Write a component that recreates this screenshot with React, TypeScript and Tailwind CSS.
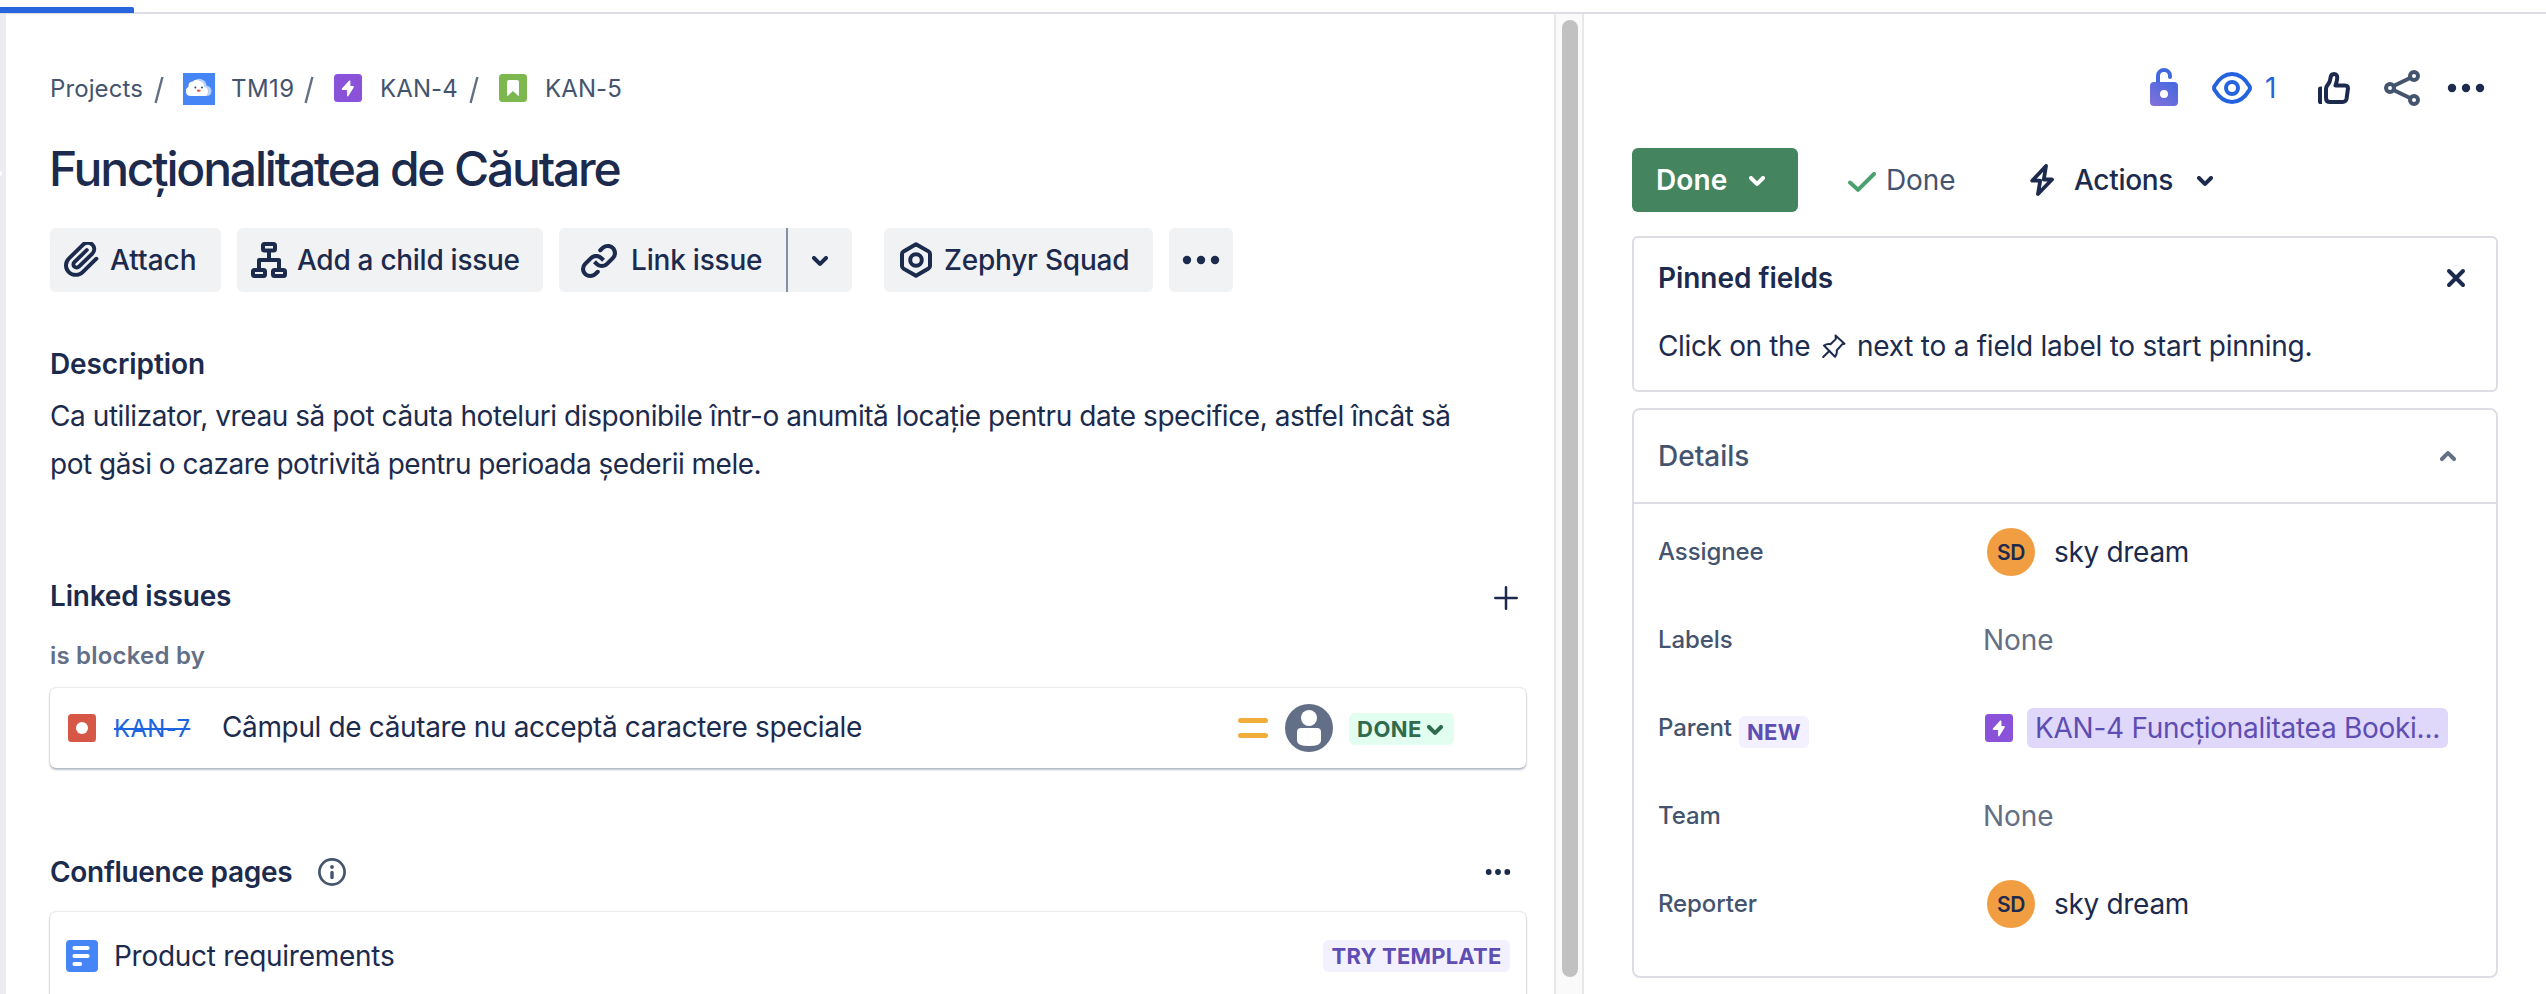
import React from "react";

type IconProps = { className?: string };

function ChevronDown({ className = "" }: IconProps) {
  return (
    <svg viewBox="8 10 8 5" className={"h-[10px] w-4 shrink-0 " + className} fill="currentColor">
      <path d="M8.292 10.293a1.009 1.009 0 000 1.419l2.939 2.965c.218.215.5.322.779.322s.556-.107.769-.322l2.93-2.955a1.01 1.01 0 000-1.419.987.987 0 00-1.406 0l-2.298 2.317-2.307-2.327a.99.99 0 00-1.406 0z" />
    </svg>
  );
}

function Dots({ r, gap, className = "" }: IconProps & { r: number; gap: number }) {
  return (
    <svg viewBox="-20 -6 40 12" width={40} height={12} className={"shrink-0 " + className} fill="currentColor">
      <circle cx={-gap} r={r} />
      <circle r={r} />
      <circle cx={gap} r={r} />
    </svg>
  );
}

function AttachIcon() {
  return (
    <svg viewBox="3 3 18 18" className="h-9 w-9 shrink-0" fill="currentColor">
      <path d="M11.643 17.965c-1.53 1.495-4.016 1.496-5.542.004a3.773 3.773 0 01.002-5.412l7.147-6.985a2.316 2.316 0 013.233-.003c.893.873.895 2.282.004 3.153l-6.703 6.55a.653.653 0 01-.914-.008.62.62 0 010-.902l6.229-6.087a.941.941 0 000-1.353.995.995 0 00-1.384 0l-6.23 6.087a2.502 2.502 0 000 3.607 2.643 2.643 0 003.683.009l6.703-6.55a4.074 4.074 0 00-.003-5.859 4.306 4.306 0 00-6.002.003l-7.148 6.985a5.655 5.655 0 00-.001 8.118c2.29 2.239 6.015 2.238 8.308-.004l6.862-6.705a.941.941 0 000-1.353.995.995 0 00-1.384 0l-6.86 6.705z" transform="translate(0 -0.6)" />
    </svg>
  );
}

function ChildIssuesIcon() {
  return (
    <svg viewBox="0 0 36 36" className="h-9 w-9 shrink-0" fill="none" stroke="currentColor" strokeWidth="4">
      <rect x="12" y="2" width="12" height="6.4" rx="1.5" />
      <rect x="2" y="28" width="12" height="6" rx="1.5" />
      <rect x="22" y="28" width="12" height="6" rx="1.5" />
      <path d="M18 9v10M8 27v-9h20v9" strokeLinejoin="round" />
    </svg>
  );
}

function LinkIcon() {
  return (
    <svg viewBox="3 3 18 18" className="h-9 w-9 shrink-0" fill="currentColor">
      <path d="M12.856 5.457l-.937.92a1.002 1.002 0 000 1.437 1.047 1.047 0 001.463 0l.984-.966c.967-.95 2.542-1.135 3.602-.288a2.54 2.54 0 01.203 3.81l-2.903 2.852a2.646 2.646 0 01-3.696 0l-1.11-1.09L9 13.57l1.108 1.089c1.822 1.788 4.802 1.788 6.622 0l2.905-2.852a4.558 4.558 0 00-.357-6.82c-1.893-1.517-4.695-1.226-6.422.47" />
      <path d="M11.144 19.543l.937-.92a1.002 1.002 0 000-1.437 1.047 1.047 0 00-1.462 0l-.985.966c-.967.95-2.542 1.135-3.602.288a2.54 2.54 0 01-.203-3.81l2.903-2.852a2.646 2.646 0 013.696 0l1.11 1.09L15 11.43l-1.108-1.089c-1.822-1.788-4.802-1.788-6.622 0l-2.905 2.852a4.558 4.558 0 00.357 6.82c1.893 1.517 4.695 1.226 6.422-.47" />
    </svg>
  );
}

function ZephyrIcon() {
  return (
    <svg viewBox="0 0 32 36" className="h-9 w-8 shrink-0" fill="none" stroke="currentColor" strokeWidth="4" strokeLinejoin="round">
      <path d="M16 2.200L3.500 9.400Q2 10.300 2 12v12q0 1.700 1.500 2.600L16 33.800l12.500-7.200Q30 25.700 30 24V12q0-1.700-1.500-2.600z" />
      <circle cx="16" cy="18" r="5.800" />
    </svg>
  );
}

function EpicIcon() {
  return (
    <svg viewBox="0 0 28 28" className="h-7 w-7 shrink-0">
      <rect width="28" height="28" rx="3.500" fill="#8A52D9" />
      <path d="M15.200 6.600q1.200-.6 1.200.8V12h2.600q1.500.1.700 1.500l-5.300 8.600q-1.300 1.200-1.300-.6V16H8.700q-1.600-.1-.8-1.400z" fill="#fff" />
    </svg>
  );
}

function StoryIcon() {
  return (
    <svg viewBox="0 0 28 28" className="h-7 w-7 shrink-0">
      <rect width="28" height="28" rx="3.500" fill="#7CB74F" />
      <path d="M8 8q0-2 2-2h8q2 0 2 2v13q0 1.600-1.200.6L14 17l-4.800 4.600Q8 22.600 8 21z" fill="#fff" />
    </svg>
  );
}

function CloudAvatar() {
  return (
    <svg viewBox="0 0 32 32" className="mt-[2px] h-8 w-8 shrink-0">
      <rect width="32" height="32" fill="#4585F6" />
      <path d="M13 7q3-2 6-.5 4 1 4.500 6 5 1 5 5.500 0 5-5 5H12z" fill="#B7D1FB" />
      <path d="M8 23q-5 0-5-4.500Q3 15 5.500 13.500 5 9 9.500 8.500 13 5.500 16.500 8q4.500.5 4.500 5.500 4 1.200 4 5 0 4.500-4.500 4.500z" fill="#fff" />
      <circle cx="12.400" cy="14.500" r="1" fill="#344563" />
      <circle cx="19" cy="14.500" r="1" fill="#344563" />
      <path d="M13.500 17q2.200-.8 4.400 0-.5 2-2.200 2t-2.200-2z" fill="#F15B50" />
    </svg>
  );
}

function Slash() {
  return (
    <svg viewBox="0 0 10 28" className="mt-[3px] h-7 w-[10px] shrink-0" stroke="#626F86" strokeWidth="2.400">
      <path d="M8.400 1L1.600 27" />
    </svg>
  );
}

function LockIcon() {
  return (
    <svg viewBox="0 0 28 38" className="h-[38px] w-7 shrink-0">
      <defs>
        <linearGradient id="lock" gradientUnits="userSpaceOnUse" x1="2" y1="38" x2="22" y2="12">
          <stop offset="0" stopColor="#8270DB" />
          <stop offset="1" stopColor="#4569DE" />
        </linearGradient>
      </defs>
      <path d="M8 15V8a6 6 0 0112 0v1" fill="none" stroke="#4268DE" strokeWidth="4" strokeLinecap="round" />
      <path fillRule="evenodd" d="M4 14h20a4 4 0 014 4v16a4 4 0 01-4 4H4a4 4 0 01-4-4V18a4 4 0 014-4zm10 8a4 4 0 100 8 4 4 0 000-8z" fill="url(#lock)" />
    </svg>
  );
}

function EyeIcon() {
  return (
    <svg viewBox="0 0 40 32" className="h-8 w-10 shrink-0" fill="none" stroke="#2563DE" strokeWidth="4">
      <path d="M2.500 14.200C7 6.500 12.800 2 20 2s13 4.500 17.500 12.200q1 1.800 0 3.600C33 25.500 27.200 30 20 30S7 25.500 2.500 17.800q-1-1.800 0-3.600z" />
      <circle cx="20" cy="16" r="6" />
    </svg>
  );
}

function ThumbIcon() {
  return (
    <svg viewBox="0 0 32 32" className="h-8 w-8 shrink-0 text-[#1C2B4D]">
      <path d="M0 17q0-2.600 2.600-2.600H4V32H2.600Q0 32 0 29.400z" fill="currentColor" />
      <path d="M8 17q0-2.400 1.600-4Q12 10.500 12.400 6.500 12.800 2 16 2q3.400 0 3.200 4-.2 3.500-1.700 7.500H27q3.400 0 2.900 3.500l-1.300 9.500Q28 30 24.500 30H12q-4 0-4-4z" fill="none" stroke="currentColor" strokeWidth="4" strokeLinejoin="round" />
    </svg>
  );
}

function ShareIcon() {
  return (
    <svg viewBox="0 0 36 36" className="h-9 w-9 shrink-0" fill="none" stroke="#44546F" strokeWidth="4">
      <circle cx="6" cy="18" r="4" />
      <circle cx="30" cy="6" r="4" />
      <circle cx="30" cy="30" r="4" />
      <path d="M9.500 16l17-8.200M9.500 20l17 8.200" />
    </svg>
  );
}

function BoltIcon() {
  return (
    <svg viewBox="0 0 24 32" className="h-8 w-6 shrink-0" fill="none" stroke="currentColor" strokeWidth="3.800" strokeLinejoin="round">
      <path d="M16 2L2.200 16.700h8L8 30l14-14.500h-8.200z" />
    </svg>
  );
}

function PinIcon() {
  return (
    <svg viewBox="0 0 24 24" className="h-6 w-6 shrink-0" fill="none" stroke="currentColor" strokeWidth="2" strokeLinejoin="round" strokeLinecap="round">
      <path d="M13.500 1.500l9 8.200-2.400.6-5.400 6.200q.6 3.500-1.700 6.300L2 11.500q3.200-2 6.500-1.200l5.400-5.400z" />
      <path d="M7.300 17L1.200 23" />
    </svg>
  );
}

const buttonBox = "flex h-16 items-center rounded-[6px] bg-[#F1F2F4]";

function Avatar() {
  return (
    <span className="ml-[3px] flex h-12 w-12 shrink-0 items-center justify-center rounded-full bg-[#F19D41] text-[21px] font-semibold tracking-[-0.3px] text-[#1C2B4D]">
      SD
    </span>
  );
}

function Person() {
  return (
    <>
      <Avatar />
      <span className="ml-[19px] tracking-[-0.31px]">sky dream</span>
    </>
  );
}

function Field({ label, badge, children }: { label: string; badge?: string; children: React.ReactNode }) {
  return (
    <div className="flex h-[88px] items-center">
      <div className="flex w-[350px] shrink-0 items-center pl-6">
        <span className="text-[24px] font-medium tracking-[-0.1px] text-[#44546F]">{label}</span>
        {badge && (
          <span className="mt-2 ml-[7px] flex h-8 w-[70px] items-center justify-center rounded-[6px] bg-[#F3F0FF] text-[22px] font-bold tracking-[0.3px] text-[#5E4DB2]">
            {badge}
          </span>
        )}
      </div>
      <div className="flex items-center">{children}</div>
    </div>
  );
}

function IssuePanel() {
  return (
    <main className="w-[1548px] shrink-0 pt-[58px] pl-11">
      <nav className="flex h-8 items-center text-[24px] text-[#44546F]">
        <span className="mt-[2px] w-[104px] tracking-[0.1px]">Projects</span>
        <Slash />
        <span className="ml-[19px] flex">
          <CloudAvatar />
        </span>
        <span className="mt-[2px] ml-4 w-[73px] tracking-[0.4px]">TM19</span>
        <Slash />
        <span className="ml-5 flex">
          <EpicIcon />
        </span>
        <span className="mt-[2px] ml-[18px] w-[89px] tracking-[0.1px]">KAN-4</span>
        <Slash />
        <span className="ml-[20px] flex">
          <StoryIcon />
        </span>
        <span className="mt-[2px] ml-[18px] tracking-[0.1px]">KAN-5</span>
      </nav>

      <h1 className="mt-[37px] -ml-px flex h-14 items-center text-[48px] font-medium tracking-[-2.2px] whitespace-nowrap">
        Funcționalitatea de Căutare
      </h1>

      <div className="mt-[31px] flex font-medium">
        <button className={buttonBox + " w-[171px] pl-[14px]"}>
          <AttachIcon />
          <span className="ml-[10px]">Attach</span>
        </button>
        <button className={buttonBox + " ml-4 w-[306px] pl-[14px]"}>
          <ChildIssuesIcon />
          <span className="ml-[10px] tracking-[-0.28px] whitespace-nowrap">Add a child issue</span>
        </button>
        <button className={buttonBox + " ml-4 w-[227px] rounded-r-none pl-[22px]"}>
          <LinkIcon />
          <span className="ml-[14px] tracking-[-0.2px] whitespace-nowrap">Link issue</span>
        </button>
        <div className="h-16 w-[2px] bg-[#8590A2]" />
        <button className={buttonBox + " w-16 justify-center rounded-l-none pt-[2px]"}>
          <ChevronDown />
        </button>
        <button className={buttonBox + " ml-8 w-[269px] pl-4"}>
          <ZephyrIcon />
          <span className="ml-3 tracking-[-0.22px] whitespace-nowrap">Zephyr Squad</span>
        </button>
        <button className={buttonBox + " ml-4 w-16 justify-center"}>
          <Dots r={4.2} gap={14} />
        </button>
      </div>

      <h2 className="mt-[52px] flex h-10 items-center font-semibold tracking-[-0.1px]">Description</h2>
      <p className="mt-2 h-24 leading-[48px] whitespace-nowrap">
        <span className="block tracking-[-0.43px]">
          Ca utilizator, vreau să pot căuta hoteluri disponibile într-o anumită locație pentru date specifice, astfel încât să
        </span>
        <span className="block tracking-[-0.5px]">pot găsi o cazare potrivită pentru perioada șederii mele.</span>
      </p>

      <div className="mt-[88px] flex h-10 w-[1476px] items-center justify-between pr-2">
        <h2 className="font-semibold tracking-[-0.2px]">Linked issues</h2>
        <svg viewBox="0 0 24 24" className="mt-1 h-6 w-6" stroke="currentColor" strokeWidth="2.500" strokeLinecap="round">
          <path d="M12 1.300v21.400M1.300 12h21.400" />
        </svg>
      </div>
      <h3 className="mt-6 flex h-8 items-center text-[24px] font-semibold tracking-[0.2px] text-[#626F86]">is blocked by</h3>

      <div className="mt-4 flex h-20 w-[1476px] items-center rounded-[6px] bg-white pl-[18px] shadow-[0_2px_2px_rgba(9,30,66,0.25),0_0_2px_rgba(9,30,66,0.31)]">
        <svg viewBox="0 0 28 28" className="h-7 w-7 shrink-0">
          <rect width="28" height="28" rx="3.500" fill="#D65745" />
          <circle cx="14" cy="14" r="6" fill="#fff" />
        </svg>
        <span className="ml-[18px] w-[108px] text-[24px] tracking-[0.3px] text-[#1D64E0]">
          <span className="mt-[2px] block line-through decoration-2">KAN-7</span>
        </span>
        <span className="-mt-[2px] w-[1016px] tracking-[-0.36px]">Câmpul de căutare nu acceptă caractere speciale</span>
        <svg viewBox="0 0 30 20" className="h-5 w-[30px] shrink-0 text-[#F2AE3D]" fill="currentColor">
          <rect width="30" height="5" rx="2.500" />
          <rect y="15" width="30" height="5" rx="2.500" />
        </svg>
        <svg viewBox="0 0 48 48" className="ml-[17px] h-12 w-12 shrink-0">
          <circle cx="24" cy="24" r="24" fill="#626F86" />
          <circle cx="24" cy="14" r="8" fill="#fff" />
          <path d="M12 28q0-4 4-4h16q4 0 4 4v8.500q0 5.500-12 5.500T12 36.500z" fill="#fff" />
        </svg>
        <span className="mt-[2px] ml-4 flex h-8 w-[105px] items-center rounded-[6px] bg-[#E1FEF1] pl-2 text-[22px] font-bold tracking-[0.5px] text-[#2F6B4C]">
          DONE
          <ChevronDown className="mt-[2px] ml-[5px]" />
        </span>
      </div>

      <div className="mt-[84px] flex h-10 w-[1476px] items-center pr-2">
        <h2 className="w-[268px] font-semibold tracking-[-0.3px]">Confluence pages</h2>
        <svg viewBox="0 0 28 28" className="h-7 w-7" fill="none" stroke="#44546F">
          <circle cx="14" cy="14" r="12.600" strokeWidth="2.700" />
          <circle cx="14" cy="9" r="1.900" fill="#44546F" stroke="none" />
          <path d="M14 14.500v5" strokeWidth="3.400" strokeLinecap="round" />
        </svg>
        <Dots r={2.9} gap={9.3} className="ml-auto" />
      </div>

      <div className="mt-5 flex h-[120px] w-[1476px] items-center rounded-[6px] bg-white pb-8 pl-4 shadow-[0_2px_2px_rgba(9,30,66,0.25),0_0_2px_rgba(9,30,66,0.31)]">
        <svg viewBox="0 0 32 32" className="h-8 w-8 shrink-0">
          <rect width="32" height="32" rx="4" fill="#4585F6" />
          <path d="M7 8h12M7 16h12M7 24h5" stroke="#fff" strokeWidth="4" strokeLinecap="round" transform="translate(1 0) scale(1.080 1)" />
        </svg>
        <span className="ml-4 tracking-[-0.27px]">Product requirements</span>
        <span className="mr-4 ml-auto flex h-8 w-[187px] items-center justify-center rounded-[6px] bg-[#F3F0FF] text-[22px] font-bold tracking-[0.2px] whitespace-nowrap text-[#5E4DB2]">
          TRY TEMPLATE
        </span>
      </div>
    </main>
  );
}

function DetailsPanel() {
  return (
    <aside className="w-[914px] pt-[54px] pl-12">
      <div className="flex h-10 items-center pl-[518px]">
        <span className="-mt-[2px] flex">
          <LockIcon />
        </span>
        <span className="ml-[34px] flex">
          <EyeIcon />
        </span>
        <span className="ml-[13px] w-[53px] text-[#2563DE]">1</span>
        <ThumbIcon />
        <span className="ml-[34px] flex">
          <ShareIcon />
        </span>
        <Dots r={4.2} gap={14} className="ml-[26px]" />
      </div>

      <div className="mt-10 flex h-16 items-center">
        <button className="flex h-16 w-[166px] items-center rounded-[6px] bg-[#44845E] pl-6 font-semibold tracking-[0.1px] text-white">
          Done
          <ChevronDown className="mt-[2px] ml-[22px]" />
        </button>
        <svg viewBox="0 0 28 20" className="mt-[3px] ml-[50px] h-5 w-7" fill="none" stroke="#4BA06E" strokeWidth="4" strokeLinecap="round" strokeLinejoin="round">
          <path d="M2 10.500l8 7.300L26 2" />
        </svg>
        <span className="ml-[10px] w-[144px] tracking-[-0.1px] text-[#44546F]">Done</span>
        <BoltIcon />
        <span className="ml-5 w-[123px] font-medium tracking-[-0.3px]">Actions</span>
        <ChevronDown className="mt-[2px]" />
      </div>

      <section className="mt-6 h-[156px] w-[866px] rounded-[6px] border-2 border-[#DDDEE5] pt-5 pl-6">
        <div className="flex h-10 items-center justify-between pr-[30px]">
          <h2 className="font-semibold tracking-[-0.05px]">Pinned fields</h2>
          <svg viewBox="0 0 20 20" className="h-5 w-5" stroke="currentColor" strokeWidth="4" strokeLinecap="round">
            <path d="M3 3l14 14M17 3L3 17" />
          </svg>
        </div>
        <div className="mt-7 flex h-10 items-center">
          <span className="w-[164px] tracking-[-0.35px]">Click on the</span>
          <PinIcon />
          <span className="ml-[11px] tracking-[-0.25px]">next to a field label to start pinning.</span>
        </div>
      </section>

      <section className="mt-4 h-[570px] w-[866px] rounded-[8px] border-2 border-[#DDDEE5]">
        <div className="flex h-[94px] items-center justify-between border-b-2 border-[#DDDEE5] pr-10 pl-6">
          <h2 className="font-medium text-[#44546F]">Details</h2>
          <ChevronDown className="rotate-180 text-[#626F86]" />
        </div>
        <div className="pt-1">
          <Field label="Assignee">
            <Person />
          </Field>
          <Field label="Labels">
            <span className="-ml-px tracking-[-0.1px] text-[#626F86]">None</span>
          </Field>
          <Field label="Parent" badge="NEW">
            <span className="ml-px flex">
              <EpicIcon />
            </span>
            <span className="ml-[14px] flex h-10 w-[421px] items-center justify-center rounded-[6px] bg-[#DFD8FA] tracking-[-0.28px] whitespace-nowrap text-[#5E4DB2]">
              KAN-4 Funcționalitatea Booki...
            </span>
          </Field>
          <Field label="Team">
            <span className="-ml-px tracking-[-0.1px] text-[#626F86]">None</span>
          </Field>
          <Field label="Reporter">
            <Person />
          </Field>
        </div>
      </section>
    </aside>
  );
}

export default function App() {
  return (
    <div className="flex h-[994px] w-[2546px] flex-col overflow-hidden bg-white font-['Inter',sans-serif] text-[28px] leading-none text-[#1C2B4D]">
      <div className="flex h-[14px] shrink-0 items-end border-b-2 border-[#DDDEE5]">
        <div className="-mb-px h-[6px] w-[134px] rounded-tr-[2px] bg-[#2864DC]" />
      </div>
      <div className="flex min-h-0 flex-1">
        <div className="w-[6px] shrink-0 overflow-hidden bg-[#ECEDF0] pt-[157px]">
          <div className="-ml-[3px] h-[5px] w-[5px] rounded-full bg-white" />
        </div>
        <IssuePanel />
        <div className="flex w-[30px] shrink-0 border-x-2 border-[#E8E8E8] bg-[#FAFAFA] pt-[6px] pl-[6px]">
          <div className="h-[957px] w-4 rounded-full bg-[#C1C1C1]" />
        </div>
        <DetailsPanel />
      </div>
    </div>
  );
}
